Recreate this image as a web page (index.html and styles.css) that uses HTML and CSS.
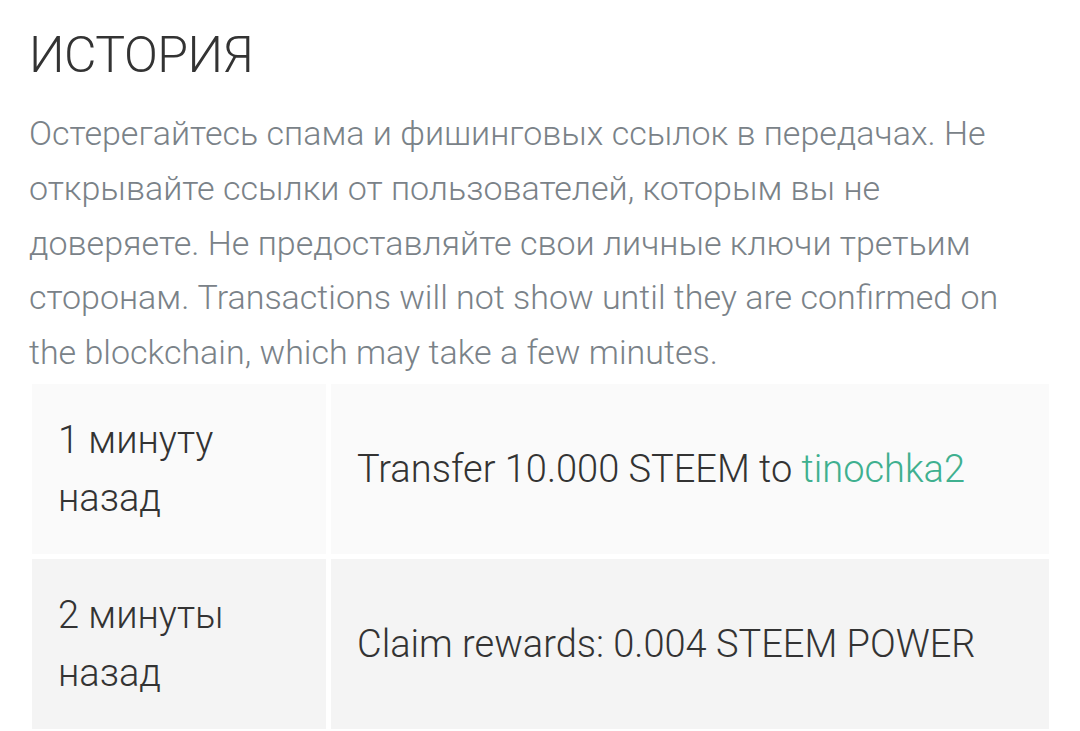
FILE: index.html
```html
<!DOCTYPE html>
<html lang="ru">
<head>
<meta charset="utf-8">
<title>История</title>
<link rel="stylesheet" href="styles.css">
</head>
<body>
<main class="page">
  <h1 class="title">ИСТОРИЯ</h1>
  <p class="notice">Остерегайтесь спама и фишинговых ссылок в передачах. Не открывайте ссылки от пользователей, которым вы не доверяете. Не предоставляйте свои личные ключи третьим сторонам. Transactions will not show until they are confirmed on the blockchain, which may take a few minutes.</p>
  <table class="history">
    <tbody>
      <tr class="row row-odd">
        <td class="cell-time">1 минуту назад</td>
        <td class="cell-op">Transfer 10.000 STEEM to <a class="user" href="#">tinochka2</a></td>
      </tr>
      <tr class="row row-even">
        <td class="cell-time">2 минуты назад</td>
        <td class="cell-op">Claim rewards: 0.004 STEEM POWER</td>
      </tr>
    </tbody>
  </table>
</main>
</body>
</html>
```

FILE: styles.css
```css
html, body {
  margin: 0;
  padding: 0;
  background: #ffffff;
}

body {
  font-family: Roboto, "Noto Sans", "Liberation Sans", sans-serif;
  font-weight: 300;
  overflow: hidden;
}

.page {
  padding: 23px 0 0 29px;
  width: 1022px;
}

.title {
  margin: 0;
  font-size: 50px;
  font-weight: 300;
  line-height: 64px;
  letter-spacing: -0.5px;
  color: #333333;
}

.notice {
  margin: 19px 0 0 0;
  font-size: 34px;
  line-height: 54.75px;
  color: #7a8288;
}

.history {
  margin: -1px 0 0 -2px;
  border-collapse: separate;
  border-spacing: 5px;
  width: 1027px;
  table-layout: fixed;
}

.history td {
  vertical-align: middle;
  font-size: 38px;
  line-height: 58px;
  color: #333333;
}

.cell-time {
  width: 242px;
  padding: 27px 26px 27px 26px;
}

.cell-op {
  padding: 0 0 0 26px;
}

.row-odd td {
  background: #fafafa;
}

.row-even td {
  background: #f4f4f4;
}

.user {
  color: #3fb08f;
  text-decoration: none;
}
```
